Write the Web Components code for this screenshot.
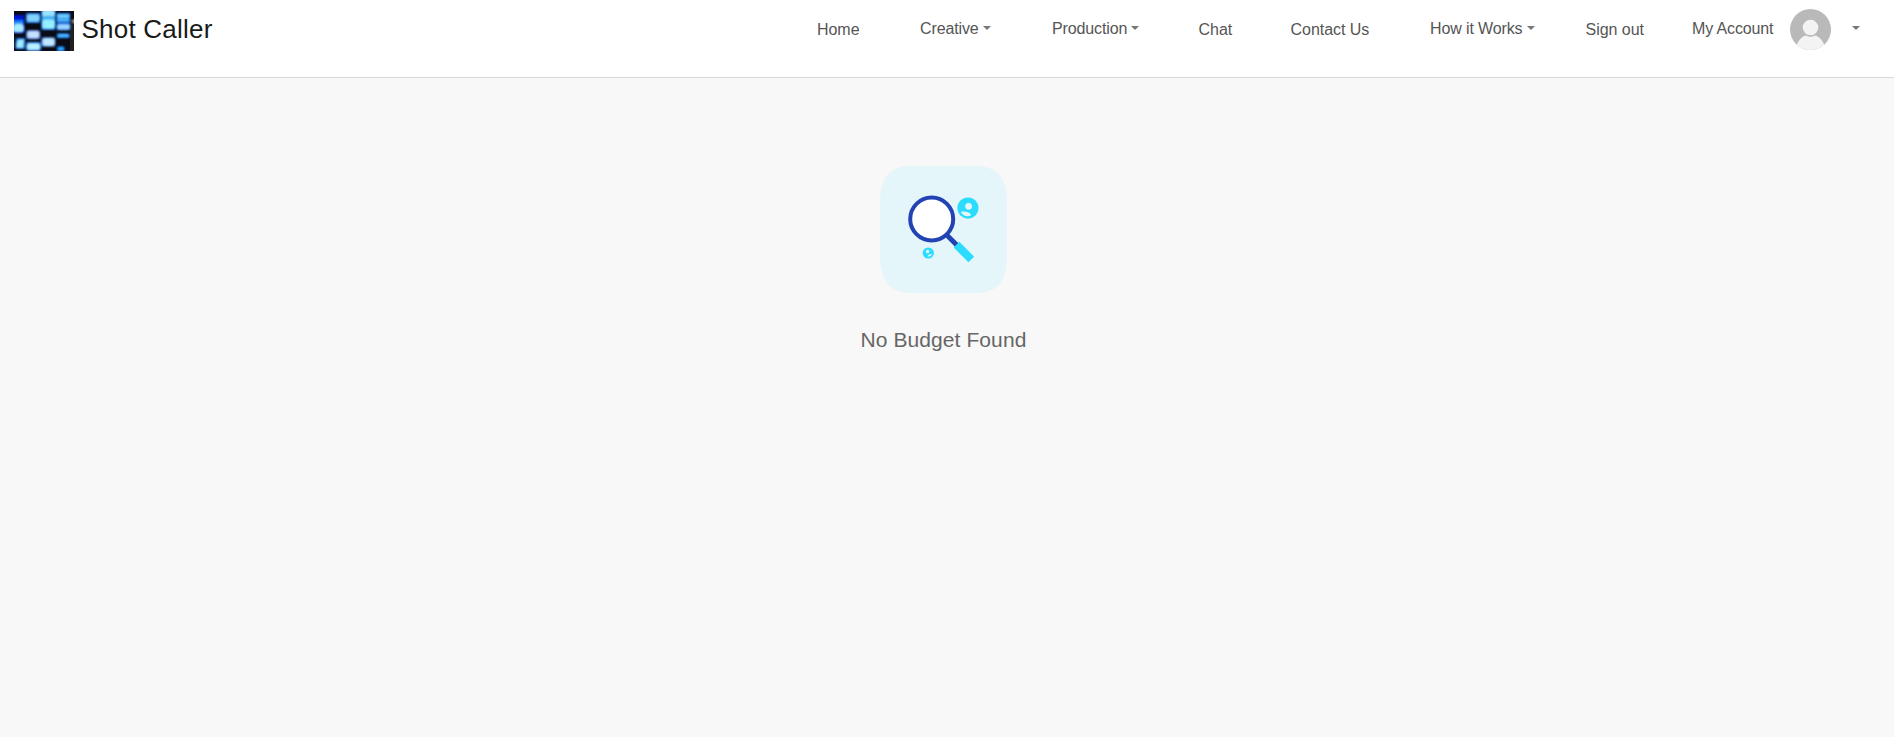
<!DOCTYPE html>
<html lang="en">
<head>
<meta charset="utf-8">
<title>Shot Caller</title>
<style>
html,body{margin:0;height:100%}
body{background:#f8f8f8;font-family:"Liberation Sans",Arial,sans-serif;font-size:16px;color:#555;overflow:hidden}
</style>
</head>
<body>
<app-header>
  <shot-logo slot="brand">Shot Caller</shot-logo>
  <nav-item style="width:103px">Home</nav-item>
  <nav-item caret style="width:132px">Creative</nav-item>
  <nav-item caret style="width:146.6px">Production</nav-item>
  <nav-item style="width:92px">Chat</nav-item>
  <nav-item style="width:139.5px">Contact Us</nav-item>
  <nav-item caret style="width:155.5px">How it Works</nav-item>
  <nav-item style="width:106.4px">Sign out</nav-item>
  <nav-item caret style="width:168px">My Account<user-avatar slot="extra"></user-avatar></nav-item>
</app-header>
<empty-state>No Budget Found</empty-state>
<script>
function define(name, html) {
  const t = document.createElement('template');
  t.innerHTML = html;
  customElements.define(name, class extends HTMLElement {
    constructor() {
      super();
      this.attachShadow({mode: 'open'}).append(t.content.cloneNode(true));
    }
  });
}

define('app-header', `
<style>
:host{display:block}
header{box-sizing:border-box;height:78px;display:flex;justify-content:space-between;align-items:flex-start;background:#fff;border-bottom:1px solid #d8d8d8;padding:9px 34px 0 14px}
nav{display:flex;align-items:flex-start}
</style>
<header><slot name="brand"></slot><nav><slot></slot></nav></header>`);

define('shot-logo', `
<style>
:host{display:flex;align-items:flex-start;gap:7.5px;color:#1a1a1a;font-size:26px;letter-spacing:.22px;line-height:30px;white-space:nowrap}
svg{display:block;margin-top:2px}
span{margin-top:5px}
</style>
<svg width="60" height="40" viewBox="0 0 60 40">
  <defs>
    <filter id="b" x="-20%" y="-20%" width="140%" height="140%"><feGaussianBlur stdDeviation=".85"/></filter>
    <filter id="g" x="-50%" y="-50%" width="200%" height="200%"><feGaussianBlur stdDeviation="1.3"/></filter>
    <clipPath id="c"><rect width="60" height="40"/></clipPath>
  </defs>
  <g clip-path="url(#c)">
    <rect width="60" height="40" fill="#0a0b14"/>
    <rect x="56" y="8" width="4" height="32" fill="#20201f"/>
    <g filter="url(#g)" fill="#0759ca">
      <rect x="-1" y="4" width="11" height="18" fill="#0018d8"/>
      <rect x="12" y="2" width="14" height="10"/><rect x="12" y="19.5" width="14" height="8.5" fill="#2a4fae"/>
      <rect x="27.5" y="-1" width="13.5" height="20"/><rect x="27.5" y="26.5" width="13.5" height="9" fill="#2a62c0"/>
      <rect x="42.5" y="2" width="13.5" height="17"/><rect x="43" y="22.5" width="12.5" height="4.5"/>
      <rect x="1.5" y="27" width="9.5" height="11"/><rect x="12" y="31" width="15" height="9"/><rect x="43" y="35.5" width="7.5" height="5"/>
    </g>
    <g filter="url(#b)">
      <rect x="-1" y="9" width="10.5" height="4" fill="#1687f2"/>
      <rect x="-1" y="13" width="11" height="8.5" rx="3" fill="#a6edff"/>
      <rect x="12.7" y="3" width="13" height="8" rx="2" fill="#82d2ff"/>
      <rect x="13" y="19.8" width="12.5" height="7.7" rx="2.5" fill="#c4e0ff"/>
      <rect x="28" y="-1" width="13" height="6.5" rx="1" fill="#9ae4ff"/>
      <rect x="28" y="5.5" width="13" height="3.5" fill="#36aef2"/>
      <rect x="28" y="8.5" width="13" height="9.5" rx="2.5" fill="#94f0ff"/>
      <rect x="28.3" y="27" width="12.5" height="8" rx="2.5" fill="#bfe8ff"/>
      <rect x="43" y="3" width="12.5" height="4" rx="1" fill="#70cffc"/>
      <rect x="43" y="7.5" width="12.5" height="3.3" rx="1" fill="#4fbdfa"/>
      <rect x="43" y="13" width="13" height="5.7" rx="2" fill="#98d4ff"/>
      <rect x="43.5" y="23" width="11.5" height="3.2" rx="1.5" fill="#4fbcff"/>
      <path d="M4 28.2H10.2L9.6 37H2.3Q2 31 4 28.2Z" fill="#a1edff"/>
      <rect x="12.8" y="32" width="13.5" height="7.2" rx="2.5" fill="#b8f0ff"/>
      <rect x="43.8" y="36" width="6" height="3.7" rx="1.5" fill="#2eacf6"/>
      <circle cx="59.7" cy="10.3" r="1.5" fill="#d9d4ce"/>
    </g>
  </g>
</svg><span><slot></slot></span>`);

define('nav-item', `
<style>
:host{display:flex;flex:none;box-sizing:border-box;align-items:flex-start;line-height:18px;letter-spacing:-.05px;white-space:nowrap;padding-top:12px}
:host([caret]){padding-top:11px;letter-spacing:-.13px}
i{display:none;flex:none;margin:6px 0 0 4px;border:4px solid transparent;border-top-color:#777;border-bottom:0}
:host([caret]) i{display:block}
</style>
<slot></slot><slot name="extra"></slot><i></i>`);

define('user-avatar', `
<style>
:host{display:block;margin:-11px 17px 0 16.8px}
svg{display:block}
</style>
<svg width="41" height="41" viewBox="0 0 41 41">
  <defs><clipPath id="c"><circle cx="20.5" cy="20.5" r="20.5"/></clipPath></defs>
  <g clip-path="url(#c)"><rect width="41" height="41" fill="#b9b9b9"/>
  <path d="M5.5 41V38C9 30 13.5 26.5 16 26.5Q20.5 29 25 26.5C27.5 26.5 32 30 35.5 38V41Z" fill="#f3f3f3"/>
  <circle cx="20.5" cy="18.5" r="7.8" fill="#f3f3f3"/></g>
</svg>`);

define('empty-state', `
<style>
:host{display:flex;flex-direction:column;align-items:center;padding:88px 7px 0 0;font-size:21px;letter-spacing:.08px;line-height:24px;color:#666}
svg{display:block;margin-bottom:35px}
</style>
<svg width="127" height="127" viewBox="0 0 127 127">
  <path d="M28 0H99C118 2 125 11 127 32V95C125 116 118 125 99 127H28C9 125 2 116 0 95V32C2 11 9 2 28 0Z" fill="#e4f6f9"/>
  <path d="M66 68.2L79 81.2" stroke="#2343b5" stroke-width="5"/>
  <circle cx="51.7" cy="53" r="21.5" fill="#fff" stroke="#2343b5" stroke-width="4"/>
  <path d="M76.5 78.7L91.3 93.5" stroke="#2bdcff" stroke-width="8"/>
  <circle cx="88" cy="42.1" r="10.6" fill="#2bdcff"/>
  <circle cx="88.6" cy="40.3" r="3.4" fill="#e4f6f9"/>
  <path d="M80.8 46C85 44.8 90 46.3 91.2 49.2C88 51.3 83 50.3 80.8 46Z" fill="#e4f6f9"/>
  <circle cx="48.3" cy="87" r="5.6" fill="#2bdcff"/>
  <circle cx="47.6" cy="85.5" r="1.7" fill="#e4f6f9"/>
  <path d="M47.5 90.5C48 88.5 50 87.7 51.8 88C51.5 89.7 49.8 90.9 47.5 90.5Z" fill="#e4f6f9"/>
</svg><slot></slot>`);
</script>
</body>
</html>
